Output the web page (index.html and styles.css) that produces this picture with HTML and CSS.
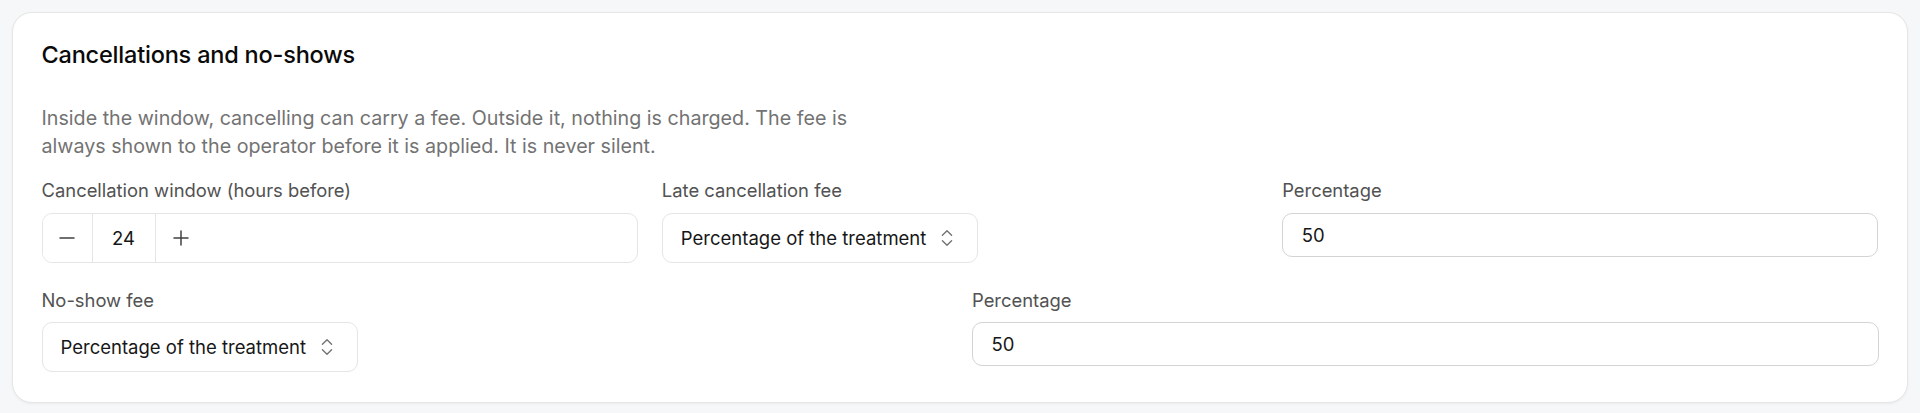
FILE: index.html
```html
<!DOCTYPE html>
<html lang="en">
<head>
<meta charset="utf-8">
<title>Cancellations and no-shows</title>
<link rel="stylesheet" href="styles.css">
</head>
<body>
<section class="card">
  <h2 class="card-title">Cancellations and no-shows</h2>
  <p class="card-desc">Inside the window, cancelling can carry a fee. Outside it, nothing is charged. The fee is always shown to the operator before it is applied. It is never silent.</p>

  <div class="grid grid-3">
    <div class="field">
      <label class="field-label">Cancellation window (hours before)</label>
      <div class="stepper">
        <button class="step-btn" type="button" aria-label="Decrease">
          <svg width="16" height="16" viewBox="0 0 16 16" fill="none" stroke="currentColor" stroke-width="1.5" stroke-linecap="round"><path d="M1 8h14"/></svg>
        </button>
        <input class="step-value" type="text" value="24">
        <button class="step-btn step-plus" type="button" aria-label="Increase">
          <svg width="16" height="16" viewBox="0 0 16 16" fill="none" stroke="currentColor" stroke-width="1.5" stroke-linecap="round"><path d="M1 8h14M8 1v14"/></svg>
        </button>
      </div>
    </div>
    <div class="field">
      <label class="field-label">Late cancellation fee</label>
      <button class="select" type="button">
        <span>Percentage of the treatment</span>
        <svg class="chev" width="22" height="22" viewBox="0 0 24 24" fill="none" stroke="currentColor" stroke-width="1.5" stroke-linecap="round" stroke-linejoin="round"><path d="m7 15 5 5 5-5"/><path d="m7 9 5-5 5 5"/></svg>
      </button>
    </div>
    <div class="field">
      <label class="field-label">Percentage</label>
      <input class="text-input" type="text" value="50">
    </div>
  </div>

  <div class="grid grid-2">
    <div class="field">
      <label class="field-label">No-show fee</label>
      <button class="select" type="button">
        <span>Percentage of the treatment</span>
        <svg class="chev" width="22" height="22" viewBox="0 0 24 24" fill="none" stroke="currentColor" stroke-width="1.5" stroke-linecap="round" stroke-linejoin="round"><path d="m7 15 5 5 5-5"/><path d="m7 9 5-5 5 5"/></svg>
      </button>
    </div>
    <div class="field">
      <label class="field-label">Percentage</label>
      <input class="text-input" type="text" value="50">
    </div>
  </div>
</section>
</body>
</html>
```

FILE: styles.css
```css
* { box-sizing: border-box; }

html, body { margin: 0; }

body {
  padding: 12px;
  background: #f6f7f8;
  font-family: Inter, "Noto Sans", "Liberation Sans", sans-serif;
  color: #171717;
}

.card {
  background: #fff;
  border: 1px solid #e6e6e6;
  border-radius: 20px;
  box-shadow: 0 1px 3px rgba(0, 0, 0, 0.05);
  padding: 27px 28.5px 29.5px 28.5px;
}

.card-title {
  margin: 0;
  font-size: 23.5px;
  line-height: 30px;
  font-weight: 500;
  letter-spacing: -0.2px;
  color: #0a0a0a;
}

.card-desc {
  margin: 34px 0 0;
  max-width: 845px;
  font-size: 19.7px;
  line-height: 28px;
  color: #737373;
}

.grid {
  display: grid;
  column-gap: 24px;
}

.grid-3 { grid-template-columns: repeat(3, 1fr); margin-top: 18px; }
.grid-2 { grid-template-columns: repeat(2, 1fr); margin-top: 25px; }

.field {
  display: flex;
  flex-direction: column;
  align-items: flex-start;
  gap: 10.5px;
}

.field-label {
  font-size: 18.4px;
  line-height: 24px;
  color: #525252;
}

.stepper {
  display: flex;
  align-self: stretch;
  height: 50px;
  border: 1px solid #e5e5e5;
  border-radius: 10px;
  overflow: hidden;
}

.step-btn {
  width: 50px;
  flex: none;
  display: flex;
  align-items: center;
  justify-content: center;
  background: #fff;
  border: 0;
  border-right: 1px solid #e5e5e5;
  color: #404040;
  padding: 0;
}

.step-plus { border-right: 0; }

.step-value {
  width: 63px;
  flex: none;
  border: 0;
  border-right: 1px solid #e5e5e5;
  text-align: center;
  font: inherit;
  font-size: 18.5px;
  color: #171717;
  padding: 0;
  outline: none;
}

.select {
  display: flex;
  align-items: center;
  gap: 10px;
  height: 50px;
  padding: 0 19px 0 18px;
  border: 1px solid #e5e5e5;
  border-radius: 10px;
  background: #fff;
  font: inherit;
  font-size: 18.5px;
  color: #171717;
}

.chev { color: #737373; flex: none; }

.text-input {
  align-self: stretch;
  height: 44px;
  border: 1px solid #d4d4d4;
  border-radius: 10px;
  padding: 0 18.5px;
  font: inherit;
  font-size: 18.5px;
  color: #171717;
  outline: none;
  background: #fff;
}
```
